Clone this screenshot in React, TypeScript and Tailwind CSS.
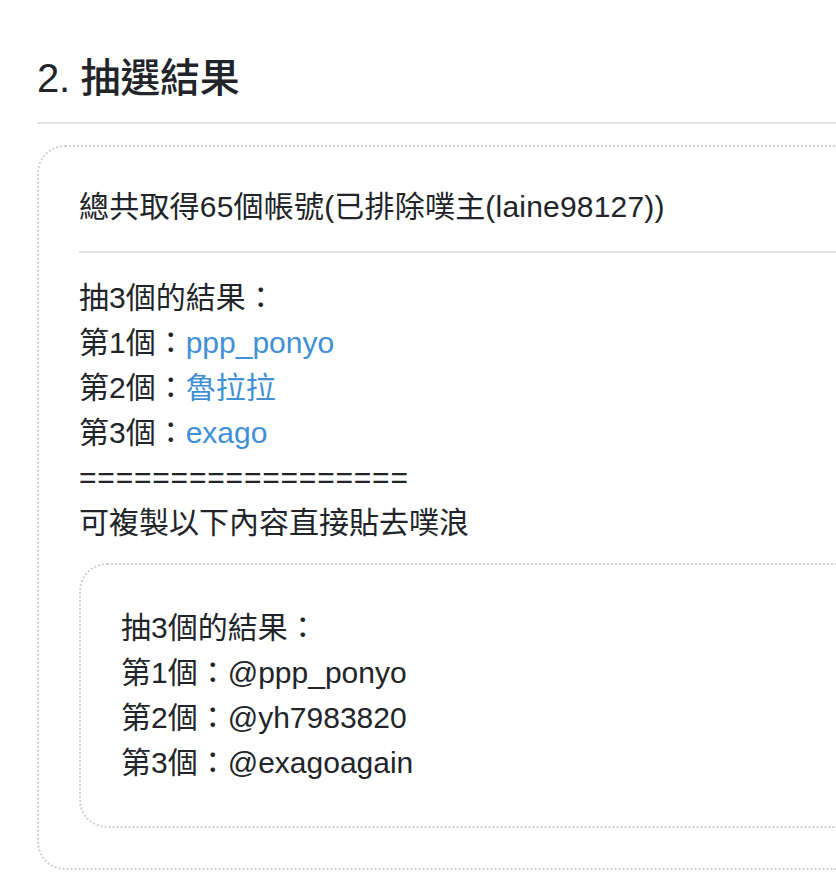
import React from "react";

const font = {
  fontFamily: '"Liberation Sans", "Noto Sans CJK TC", Arial, sans-serif',
};

function Link({ children }: { children: React.ReactNode }) {
  return <a className="text-[#4190d6] no-underline">{children}</a>;
}

export default function App() {
  return (
    <div className="w-[836px] h-[890px] overflow-hidden bg-white text-[#212529]" style={font}>
      <div className="w-[960px] pl-[37px] pt-[54px]">
        <h2 className="text-[40px] leading-[48px] font-medium pb-[20px] border-b-2 border-[#e4e4e4] tracking-[-0.3px]">
          2. 抽選結果
        </h2>
        <div className="mt-[21px] rounded-[28px] border-2 border-dotted border-[#cfcfcf] pl-[40px] pt-[37px] pb-[40px] text-[30px] leading-[45px]">
          <div className="tracking-[0.2px]">總共取得65個帳號(已排除噗主(laine98127))</div>
          <div className="mt-[22px] mb-[22px] border-t-2 border-[#e4e4e4]" />
          <div>抽3個的結果：</div>
          <div>
            第1個：<Link>ppp_ponyo</Link>
          </div>
          <div>
            第2個：<Link>魯拉拉</Link>
          </div>
          <div>
            第3個：<Link>exago</Link>
          </div>
          <div className="tracking-[0.8px]">==================</div>
          <div>可複製以下內容直接貼去噗浪</div>
          <div className="mt-[18px] rounded-[28px] border-2 border-dotted border-[#cfcfcf] pl-[40px] pt-[40px] pb-[41px]">
            <div>抽3個的結果：</div>
            <div>第1個：@ppp_ponyo</div>
            <div>第2個：@yh7983820</div>
            <div>第3個：@exagoagain</div>
          </div>
        </div>
      </div>
    </div>
  );
}
